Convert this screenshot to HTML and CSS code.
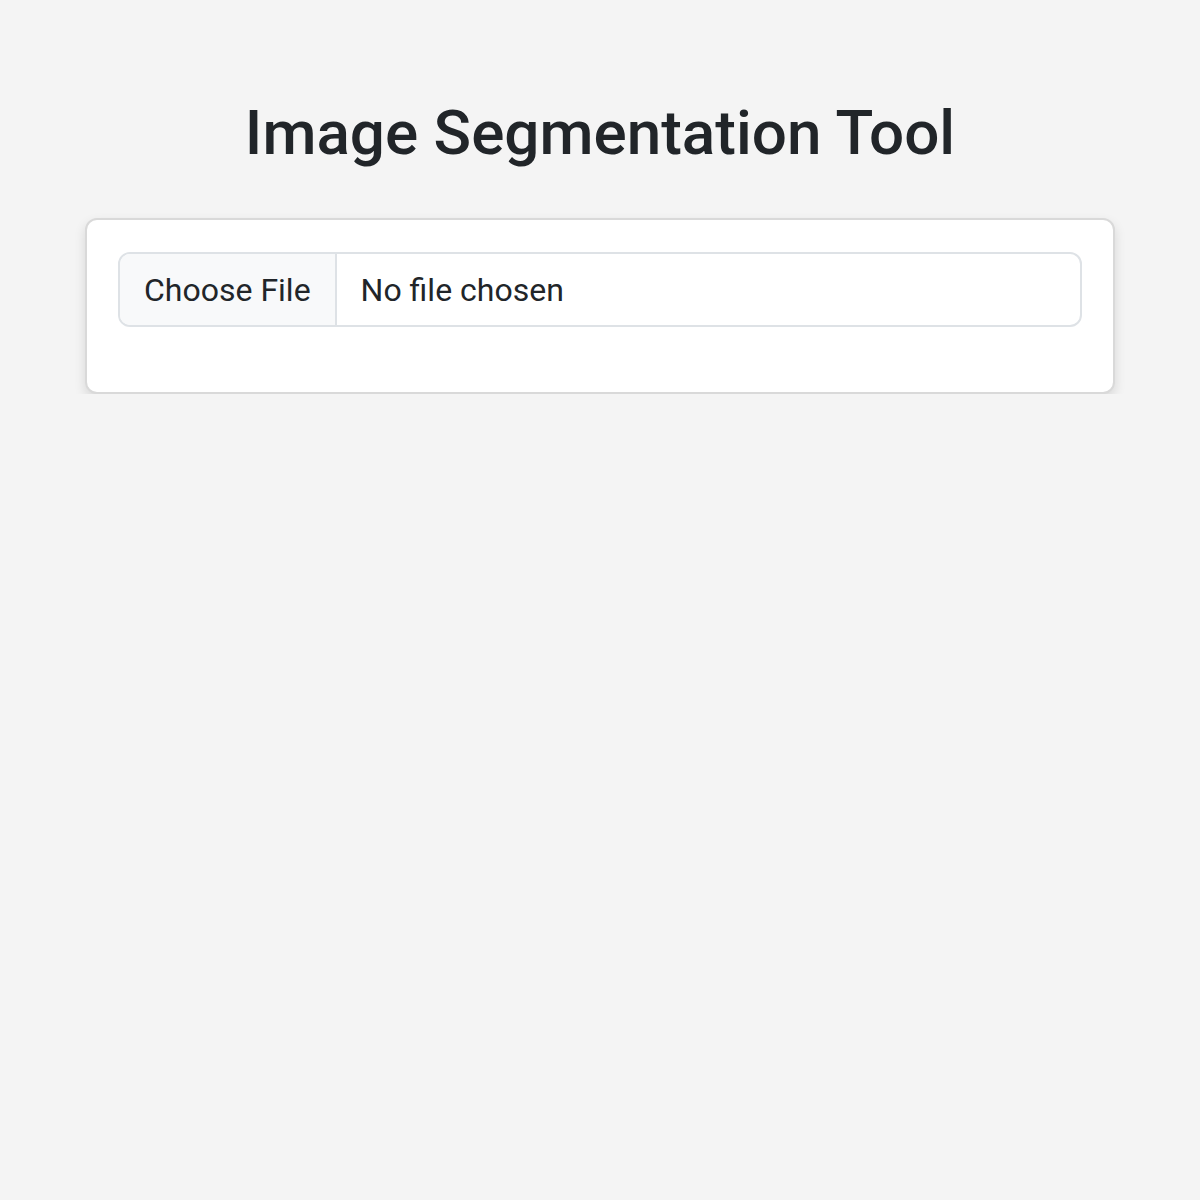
FILE: index.html
```html
<!DOCTYPE html>
<html lang="en">
<head>
<meta charset="utf-8">
<title>Image Segmentation Tool</title>
<link rel="stylesheet" href="styles.css">
</head>
<body>
<main class="page">
  <h1 class="title">Image Segmentation Tool</h1>
  <section class="card">
    <label class="file-input">
      <input type="file" class="file-native" accept="image/*">
      <span class="file-button">Choose File</span>
      <span class="file-name">No file chosen</span>
    </label>
  </section>
</main>
</body>
</html>
```

FILE: styles.css
```css
* { box-sizing: border-box; }
html, body { margin: 0; padding: 0; }
body {
  background: #f4f4f4;
  font-family: Roboto, "Liberation Sans", Arial, sans-serif;
  color: #212529;
}
.page {
  padding: 96px 85px 0;
  display: flex;
  flex-direction: column;
}
.title {
  margin: 0 0 48px;
  font-size: 62px;
  font-weight: 500;
  line-height: 1.2;
  text-align: center;
  color: #212529;
}
.card {
  background: #fff;
  border: 2px solid #d9d9d9;
  border-radius: 12px;
  padding: 32px 31px 65px;
  box-shadow: 0 5px 12px rgba(0, 0, 0, 0.12);
}
.file-input {
  display: flex;
  align-items: stretch;
  height: 75px;
  border: 2px solid #dee2e6;
  border-radius: 12px;
  overflow: hidden;
  background: #fff;
  font-size: 32px;
  line-height: 1.5;
  color: #212529;
}
.file-native { display: none; }
.file-button {
  display: flex;
  align-items: center;
  padding: 0 24px;
  background: #f8f9fa;
  border-right: 2px solid #dee2e6;
  white-space: nowrap;
}
.file-name {
  display: flex;
  align-items: center;
  padding: 0 24px;
  white-space: nowrap;
}
```
